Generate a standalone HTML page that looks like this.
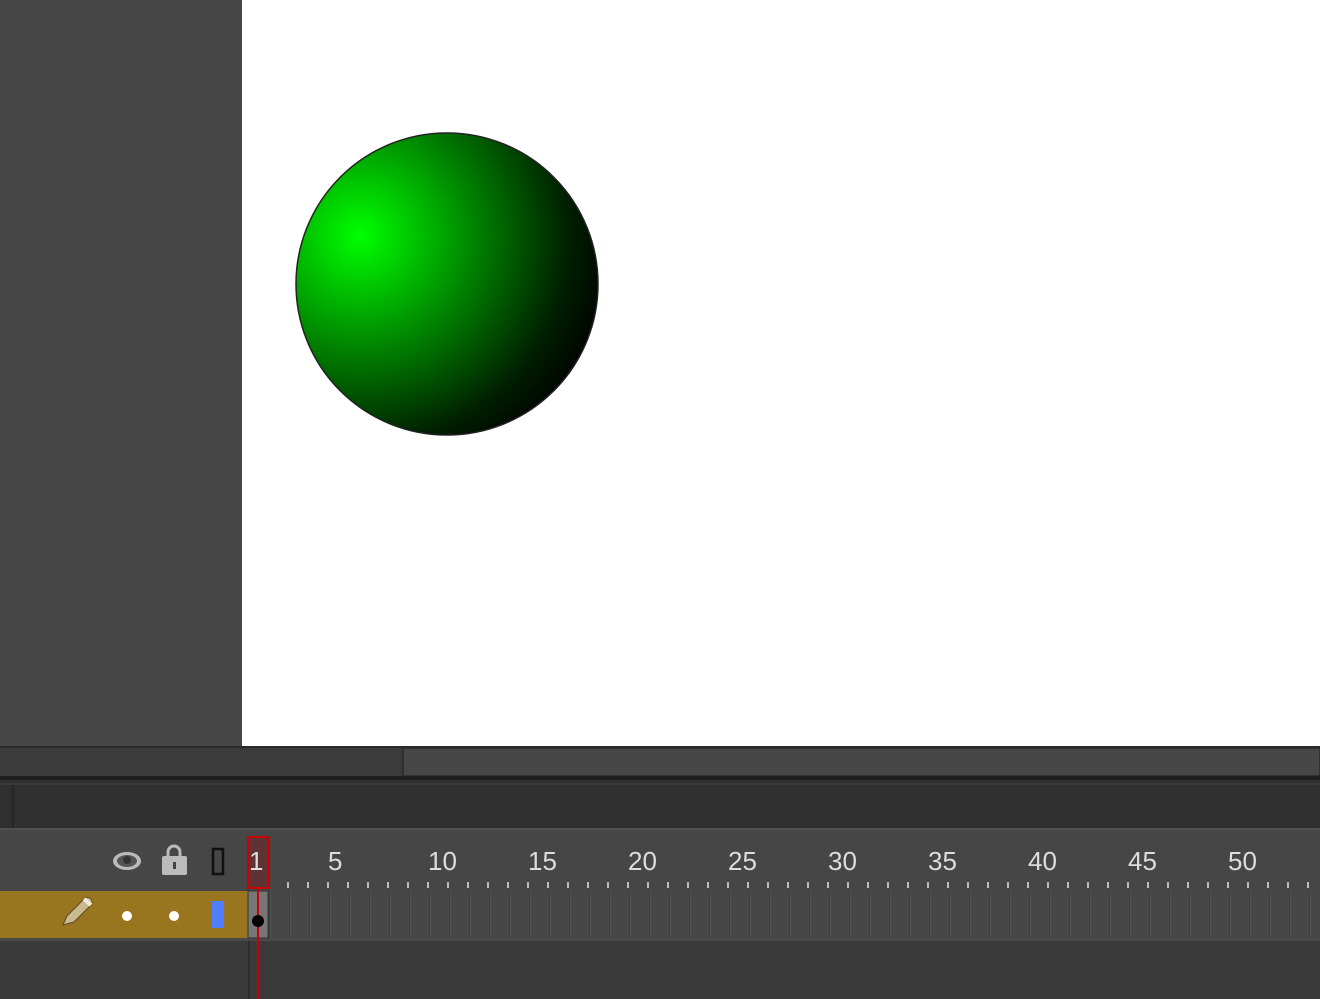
<!DOCTYPE html>
<html><head><meta charset="utf-8"><style>
html,body{margin:0;padding:0;width:1320px;height:999px;overflow:hidden;background:#3a3a3a}
svg{display:block}
</style></head><body>
<svg width="1320" height="999" xmlns="http://www.w3.org/2000/svg" font-family="Liberation Sans, sans-serif">
<defs>
<radialGradient id="g" cx="360" cy="235" r="260" gradientUnits="userSpaceOnUse">
<stop offset="0" stop-color="#00ff00"/><stop offset="0.45" stop-color="#008000"/><stop offset="0.8" stop-color="#002000"/><stop offset="1" stop-color="#000"/>
</radialGradient>
<pattern id="cells" x="248" y="0" width="20" height="999" patternUnits="userSpaceOnUse">
<rect x="0" y="0" width="20" height="999" fill="#474747"/>
<rect x="1" y="0" width="1" height="999" fill="#3d3d3d"/>
<rect x="2" y="0" width="1" height="999" fill="#545454"/>
</pattern>
</defs>
<rect x="0" y="0" width="242" height="746" fill="#464646"/>
<rect x="242" y="0" width="1078" height="746" fill="#fff"/>
<circle cx="447" cy="284" r="151" fill="url(#g)" stroke="#222" stroke-width="1.5"/>
<rect x="0" y="746" width="1320" height="2" fill="#2a2a2a"/>
<rect x="0" y="748" width="1320" height="30" fill="#3b3b3b"/>
<rect x="403" y="748" width="917" height="28" fill="#474747" stroke="#2a2a2a" stroke-width="1.5"/>
<rect x="0" y="776" width="1320" height="4" fill="#1e1e1e"/>
<rect x="0" y="780" width="1320" height="48" fill="#2f2f2f"/>
<rect x="0" y="783" width="1320" height="2" fill="#3a3a3a"/>
<rect x="12" y="785" width="2" height="43" fill="#262626"/>
<rect x="0" y="828" width="1320" height="63" fill="#464646"/>
<rect x="0" y="828" width="1320" height="2" fill="#505050"/>
<g fill="#ddd" font-size="26">
<text x="328" y="870">5</text>
<text x="428" y="870">10</text><text x="528" y="870">15</text><text x="628" y="870">20</text>
<text x="728" y="870">25</text><text x="828" y="870">30</text><text x="928" y="870">35</text>
<text x="1028" y="870">40</text><text x="1128" y="870">45</text><text x="1228" y="870">50</text>
</g>
<g stroke="#bbb" stroke-width="2">
<path d="M288 882v6M308 882v6M328 882v6M348 882v6M368 882v6M388 882v6M408 882v6M428 882v6M448 882v6M468 882v6M488 882v6M508 882v6M528 882v6M548 882v6M568 882v6M588 882v6M608 882v6M628 882v6M648 882v6M668 882v6M688 882v6M708 882v6M728 882v6M748 882v6M768 882v6M788 882v6M808 882v6M828 882v6M848 882v6M868 882v6M888 882v6M908 882v6M928 882v6M948 882v6M968 882v6M988 882v6M1008 882v6M1028 882v6M1048 882v6M1068 882v6M1088 882v6M1108 882v6M1128 882v6M1148 882v6M1168 882v6M1188 882v6M1208 882v6M1228 882v6M1248 882v6M1268 882v6M1288 882v6M1308 882v6"/>
</g>
<ellipse cx="127" cy="861" rx="14" ry="9" fill="#bbb"/>
<ellipse cx="127" cy="861" rx="10" ry="6" fill="#555"/>
<circle cx="127" cy="860" r="4" fill="#333"/>
<path d="M168 857v-5a6 6 0 0 1 12 0v5" fill="none" stroke="#bbb" stroke-width="3"/>
<rect x="162" y="856" width="25" height="19" rx="2" fill="#bbb"/>
<rect x="173" y="862" width="3" height="7" fill="#444"/>
<rect x="213" y="849" width="10" height="25" fill="none" stroke="#111" stroke-width="2.5"/>
<rect x="0" y="891" width="248" height="47" fill="#9a7520"/>
<rect x="248" y="891" width="1072" height="47" fill="url(#cells)"/>
<rect x="0" y="938" width="1320" height="3" fill="#4a4a4a"/>
<rect x="248" y="891" width="20" height="47" fill="#767676" stroke="#333"/>
<rect x="248" y="941" width="2" height="58" fill="#2c2c2c"/>
<path d="M63 925l4-9 17-17a4 4 0 0 1 7 6l-17 17z" fill="#cbb98f" stroke="#5a4a2a" stroke-width="1"/>
<path d="M84 899l7 6" stroke="#f0ead8" stroke-width="4"/>
<circle cx="127" cy="916" r="5" fill="#fff"/>
<circle cx="174" cy="916" r="5" fill="#fff"/>
<rect x="212" y="901" width="12" height="27" fill="#4f7fff"/>
<rect x="248" y="837" width="21" height="51" fill="#6a2b2b" fill-opacity="0.7" stroke="#c00" stroke-width="2"/>
<text x="249" y="870" fill="#ddd" font-size="26">1</text>
<rect x="257" y="888" width="2" height="111" fill="#c00"/>
<circle cx="258" cy="921" r="6" fill="#000"/>
</svg>
</body></html>
